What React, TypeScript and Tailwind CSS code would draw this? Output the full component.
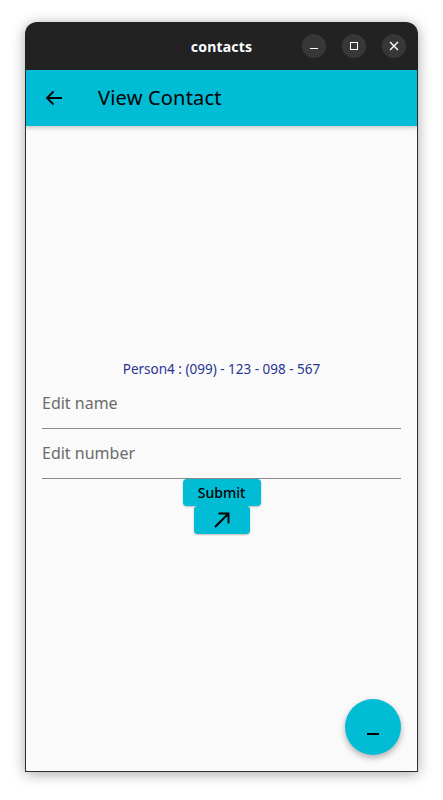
import React from "react";

export default function App() {
  const font = { fontFamily: '"Noto Sans", "Open Sans", sans-serif' };
  return (
    <div className="w-[443px] h-[800px] bg-white pt-[22px] pl-[25px]" style={font}>
      <div className="relative w-[393px] h-[750px] flex flex-col rounded-t-[12px] overflow-hidden shadow-[0_2px_14px_rgba(0,0,0,0.35)]">
        <div className="h-[48px] bg-[#222222] flex items-center relative shrink-0">
          <div className="absolute inset-0 flex items-center justify-center text-white text-[14px] font-bold tracking-[0.2px]">contacts</div>
          <div className="ml-auto mr-[12px] flex items-center gap-[16px] relative">
            <div className="w-[24px] h-[24px] rounded-full bg-[#373737] flex items-center justify-center">
              <div className="w-[8px] h-[1.5px] bg-white mt-[5px]" />
            </div>
            <div className="w-[24px] h-[24px] rounded-full bg-[#373737] flex items-center justify-center">
              <div className="w-[8px] h-[8px] border-[1.5px] border-white" />
            </div>
            <div className="w-[24px] h-[24px] rounded-full bg-[#373737] flex items-center justify-center">
              <svg width="10" height="10" viewBox="0 0 10 10">
                <path d="M1 1 L9 9 M9 1 L1 9" stroke="white" strokeWidth="1.4" />
              </svg>
            </div>
          </div>
        </div>
        <div className="flex-1 flex flex-col border-x border-b border-[#2e2e2e]">
          <div className="h-[56px] bg-[#00bcd4] flex items-center shrink-0 shadow-[0_2px_4px_rgba(0,0,0,0.2)] relative z-10">
            <div className="w-[56px] pl-[19px] flex items-center">
              <svg width="18" height="16" viewBox="0 0 18 16">
                <path d="M17 8 H2 M8.5 1.5 L2 8 L8.5 14.5" stroke="black" strokeWidth="1.8" fill="none" />
              </svg>
            </div>
            <div className="ml-[16px] text-[20px] text-black leading-none tracking-[0.2px]">View Contact</div>
          </div>
          <div className="flex-1 bg-[#fafafa] flex flex-col justify-center items-stretch px-[16px] relative">
            <div className="flex flex-col items-center mt-[-6px]">
              <div className="text-[13.5px] text-[#283593] leading-[20px] pt-[1px]">Person4 : (099) - 123 - 098 - 567</div>
              <div className="w-full h-[50px] border-b border-[#8a8a8a] flex items-center text-[16px] text-[#6b6b6b]">Edit name</div>
              <div className="w-full h-[50px] border-b border-[#8a8a8a] flex items-center text-[16px] text-[#6b6b6b]">Edit number</div>
              <div className="w-[78px] h-[27px] bg-[#00bcd4] rounded-[4px] flex items-center justify-center text-[14px] font-medium text-black shadow-[0_1px_2px_rgba(0,0,0,0.25)]">Submit</div>
              <div className="w-[56px] h-[28px] bg-[#00bcd4] rounded-[4px] flex items-center justify-center shadow-[0_1px_2px_rgba(0,0,0,0.25)]">
                <svg width="18" height="18" viewBox="0 0 18 18">
                  <path d="M2 16 L15.5 2.5 M5.5 2.5 H15.5 V12.5" stroke="black" strokeWidth="1.9" fill="none" />
                </svg>
              </div>
            </div>
            <div className="absolute right-[16px] bottom-[16px] w-[56px] h-[56px] rounded-full bg-[#00bcd4] flex items-center justify-center shadow-[0_3px_6px_rgba(0,0,0,0.3)]">
              <div className="w-[12px] h-[2px] bg-black mt-[14px]" />
            </div>
          </div>
        </div>
      </div>
    </div>
  );
}
